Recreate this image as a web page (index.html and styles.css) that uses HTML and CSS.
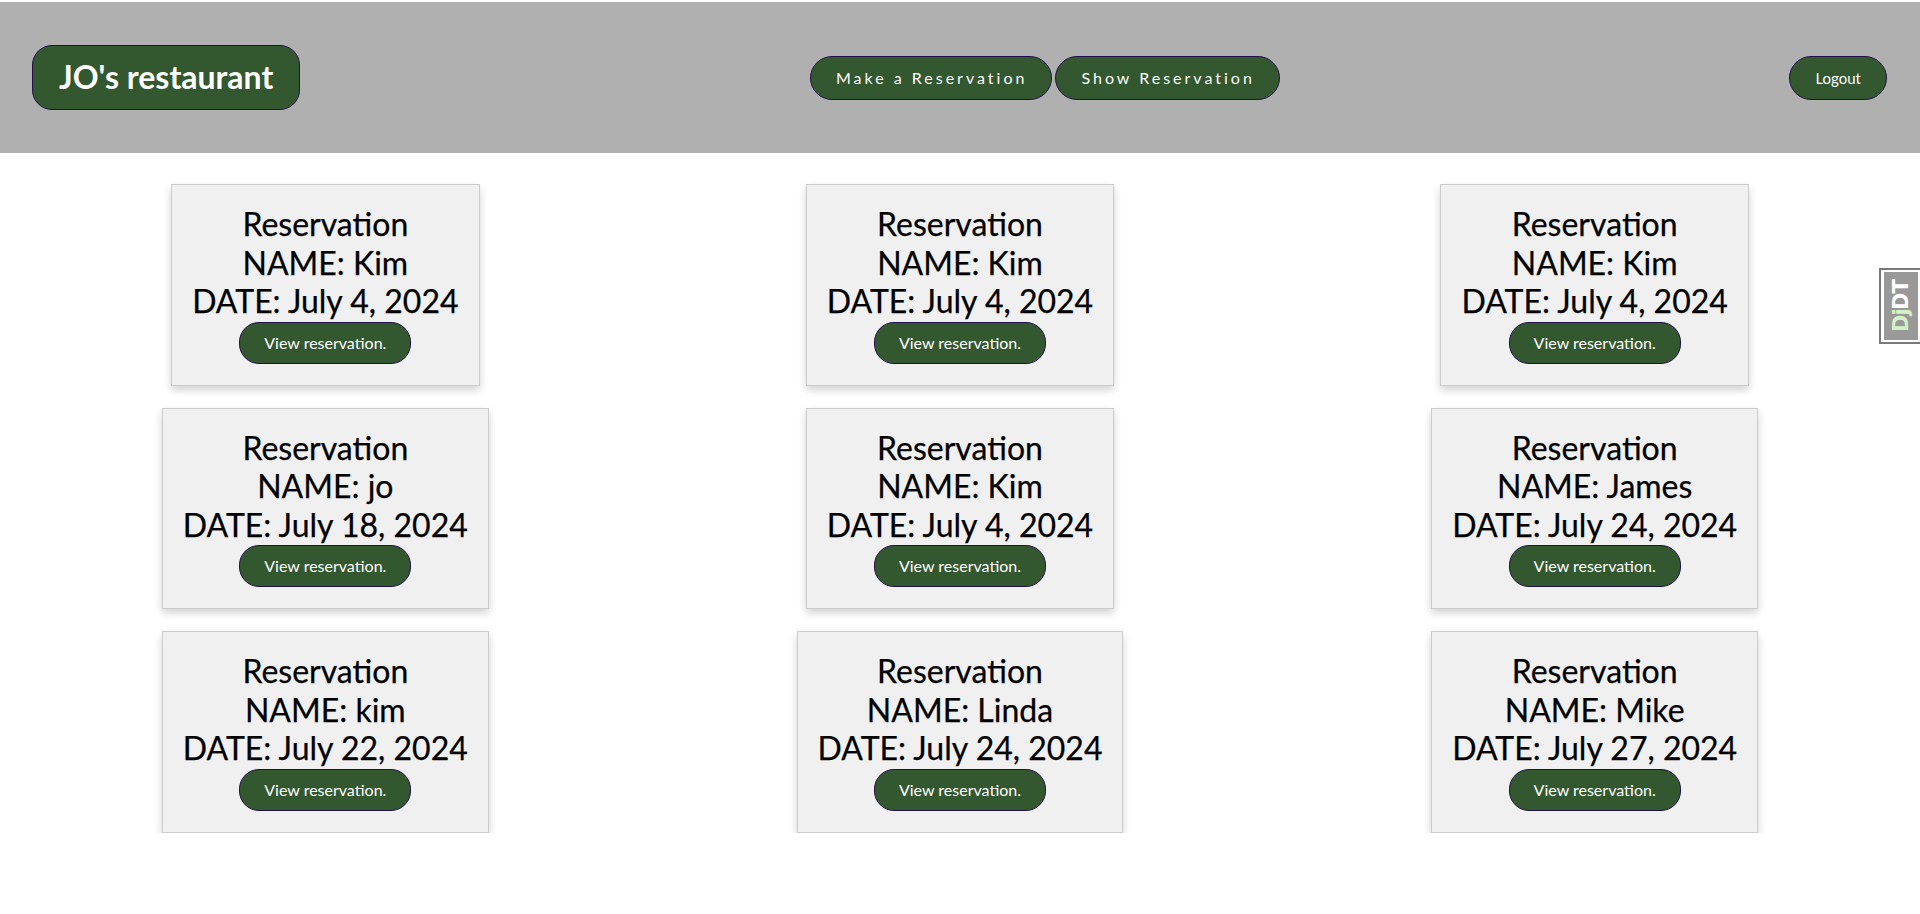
FILE: index.html
```html
<!DOCTYPE html>
<html lang="en">
<head>
<meta charset="utf-8">
<title>JO's restaurant</title>
<link rel="stylesheet" href="styles.css">
</head>
<body>
<header class="topbar">
  <a class="btn btn-logo" href="#">JO's restaurant</a>
  <nav class="nav">
    <a class="btn btn-nav" href="#">Make a Reservation</a>
    <a class="btn btn-nav" href="#">Show Reservation</a>
  </nav>
  <a class="btn btn-logout" href="#">Logout</a>
</header>
<main class="grid">
  <div class="card"><div class="line">Reservation</div><div class="line">NAME: Kim</div><div class="line">DATE: July 4, 2024</div><a class="btn btn-view" href="#">View reservation.</a></div>
  <div class="card"><div class="line">Reservation</div><div class="line">NAME: Kim</div><div class="line">DATE: July 4, 2024</div><a class="btn btn-view" href="#">View reservation.</a></div>
  <div class="card"><div class="line">Reservation</div><div class="line">NAME: Kim</div><div class="line">DATE: July 4, 2024</div><a class="btn btn-view" href="#">View reservation.</a></div>
  <div class="card"><div class="line">Reservation</div><div class="line">NAME: jo</div><div class="line">DATE: July 18, 2024</div><a class="btn btn-view" href="#">View reservation.</a></div>
  <div class="card"><div class="line">Reservation</div><div class="line">NAME: Kim</div><div class="line">DATE: July 4, 2024</div><a class="btn btn-view" href="#">View reservation.</a></div>
  <div class="card"><div class="line">Reservation</div><div class="line">NAME: James</div><div class="line">DATE: July 24, 2024</div><a class="btn btn-view" href="#">View reservation.</a></div>
  <div class="card"><div class="line">Reservation</div><div class="line">NAME: kim</div><div class="line">DATE: July 22, 2024</div><a class="btn btn-view" href="#">View reservation.</a></div>
  <div class="card"><div class="line">Reservation</div><div class="line">NAME: Linda</div><div class="line">DATE: July 24, 2024</div><a class="btn btn-view" href="#">View reservation.</a></div>
  <div class="card"><div class="line">Reservation</div><div class="line">NAME: Mike</div><div class="line">DATE: July 27, 2024</div><a class="btn btn-view" href="#">View reservation.</a></div>
</main>
<div class="djdt"><span class="djdt-inner"><span class="dj">Dj</span>DT</span></div>
</body>
</html>
```
FILE: styles.css
```css
html, body {
  margin: 0;
  padding: 0;
  background: #ffffff;
  font-family: Lato, "Liberation Sans", sans-serif;
  color: #000;
}

.topbar {
  margin-top: 2px;
  height: 151px;
  background: #b0b0b0;
  display: flex;
  align-items: center;
  justify-content: space-between;
  padding: 0 33px 0 32px;
}

.btn {
  display: inline-block;
  background: #33572f;
  color: #ffffff;
  text-decoration: none;
  border: 1px solid #22104a;
  border-radius: 20px;
  padding: 12px 24px;
  line-height: 1.2;
}

.btn-logo {
  font-size: 32px;
  font-weight: 700;
  padding: 12px 26px;
}

.nav {
  display: flex;
  gap: 3px;
}

.btn-nav {
  font-size: 16px;
  line-height: 20px;
  letter-spacing: 3px;
  padding: 11px 24px 11px 25px;
  border-radius: 22px;
}

.btn-logout {
  font-size: 15px;
  line-height: 20px;
  padding: 11px 25px;
  border-radius: 22px;
}

.grid {
  display: grid;
  grid-template-columns: repeat(3, 1fr);
  justify-items: center;
  align-items: start;
  row-gap: 22px;
  padding: 31px 8px 0;
}

.card {
  background: #f0f0f0;
  border: 1px solid #cccccc;
  box-shadow: 0 4px 8px rgba(0, 0, 0, 0.18);
  padding: 20px 20px 21px;
  display: flex;
  flex-direction: column;
  align-items: center;
}

.line {
  font-size: 32px;
  line-height: 38.5px;
  -webkit-text-stroke: 0.25px #000;
}

.btn-view {
  font-size: 16px;
  line-height: 20px;
  padding: 10px 24px;
  margin-top: 1px;
}

.djdt {
  position: fixed;
  right: 0;
  top: 268px;
  width: 34px;
  height: 68px;
  background: #ffffff;
  border: 2px solid #7a7a7a;
  border-right: none;
  padding: 2px 2px 2px 3px;
  display: flex;
}

.djdt-inner {
  flex: 1;
  background: #999999;
  color: #ffffff;
  font-family: "DejaVu Sans", sans-serif;
  font-weight: 700;
  font-size: 21px;
  writing-mode: vertical-rl;
  transform: rotate(180deg);
  display: flex;
  align-items: center;
  justify-content: center;
  letter-spacing: -1px;
}

.dj {
  color: #d6f0c8;
}
```
